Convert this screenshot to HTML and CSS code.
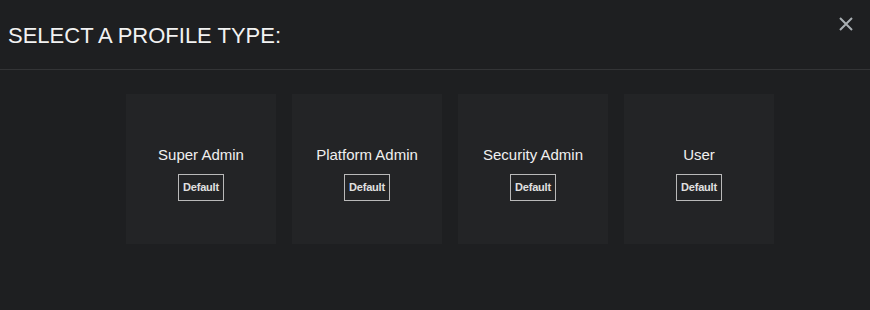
FILE: index.html
```html
<!DOCTYPE html>
<html lang="en">
<head>
   <meta charset="UTF-8">
   <title>Select a profile type</title>
   <link rel="stylesheet" href="styles.css">
</head>
<body>
   <div class="modal">
       <div class="modal-header">
           <h2>SELECT A PROFILE TYPE:</h2>
           <button class="close" aria-label="Close">
               <svg width="16" height="16" viewBox="0 0 16 16"><path d="M2 2L14 14M14 2L2 14" stroke="#a9afb3" stroke-width="2" fill="none"/></svg>
           </button>
       </div>
       <div class="profiles">
           <div class="profile">
               <div class="profile-name">Super Admin</div>
               <span class="tag">Default</span>
           </div>
           <div class="profile">
               <div class="profile-name">Platform Admin</div>
               <span class="tag">Default</span>
           </div>
           <div class="profile">
               <div class="profile-name">Security Admin</div>
               <span class="tag">Default</span>
           </div>
           <div class="profile">
               <div class="profile-name">User</div>
               <span class="tag">Default</span>
           </div>
       </div>
   </div>
</body>
</html>
```

FILE: styles.css
```css
body {
    font-family: "Liberation Sans", Arial, sans-serif;
    background-color: #1e1f21;
    margin: 0;
    padding: 0;
    color: #f2f2f2;
}
.modal {
    width: 870px;
    height: 310px;
}
.modal-header {
    display: flex;
    justify-content: space-between;
    align-items: flex-start;
    height: 69px;
    border-bottom: 1px solid #333436;
}
.modal-header h2 {
    margin: 0;
    padding: 23px 0 0 8px;
    font-size: 22px;
    line-height: 25px;
    font-weight: normal;
    color: #f2f2f2;
}
.close {
    background: none;
    border: none;
    padding: 0;
    margin: 16px 16px 0 0;
    width: 16px;
    height: 16px;
    cursor: pointer;
}
.close svg {
    display: block;
}
.profiles {
    display: flex;
    justify-content: center;
    gap: 16px;
    padding: 24px 0 0 30px;
}
.profile {
    width: 150px;
    height: 150px;
    box-sizing: border-box;
    padding-top: 9px;
    background-color: #232426;
    display: flex;
    flex-direction: column;
    align-items: center;
    justify-content: center;
}
.profile-name {
    font-size: 15px;
    line-height: 17px;
    margin-bottom: 11px;
    color: #f0f0f0;
}
.tag {
    display: inline-block;
    border: 1px solid #b9b9b9;
    padding: 6px 4px;
    font-size: 11px;
    font-weight: bold;
    letter-spacing: -0.2px;
    color: #e0e0e0;
    line-height: 13px;
}
```
